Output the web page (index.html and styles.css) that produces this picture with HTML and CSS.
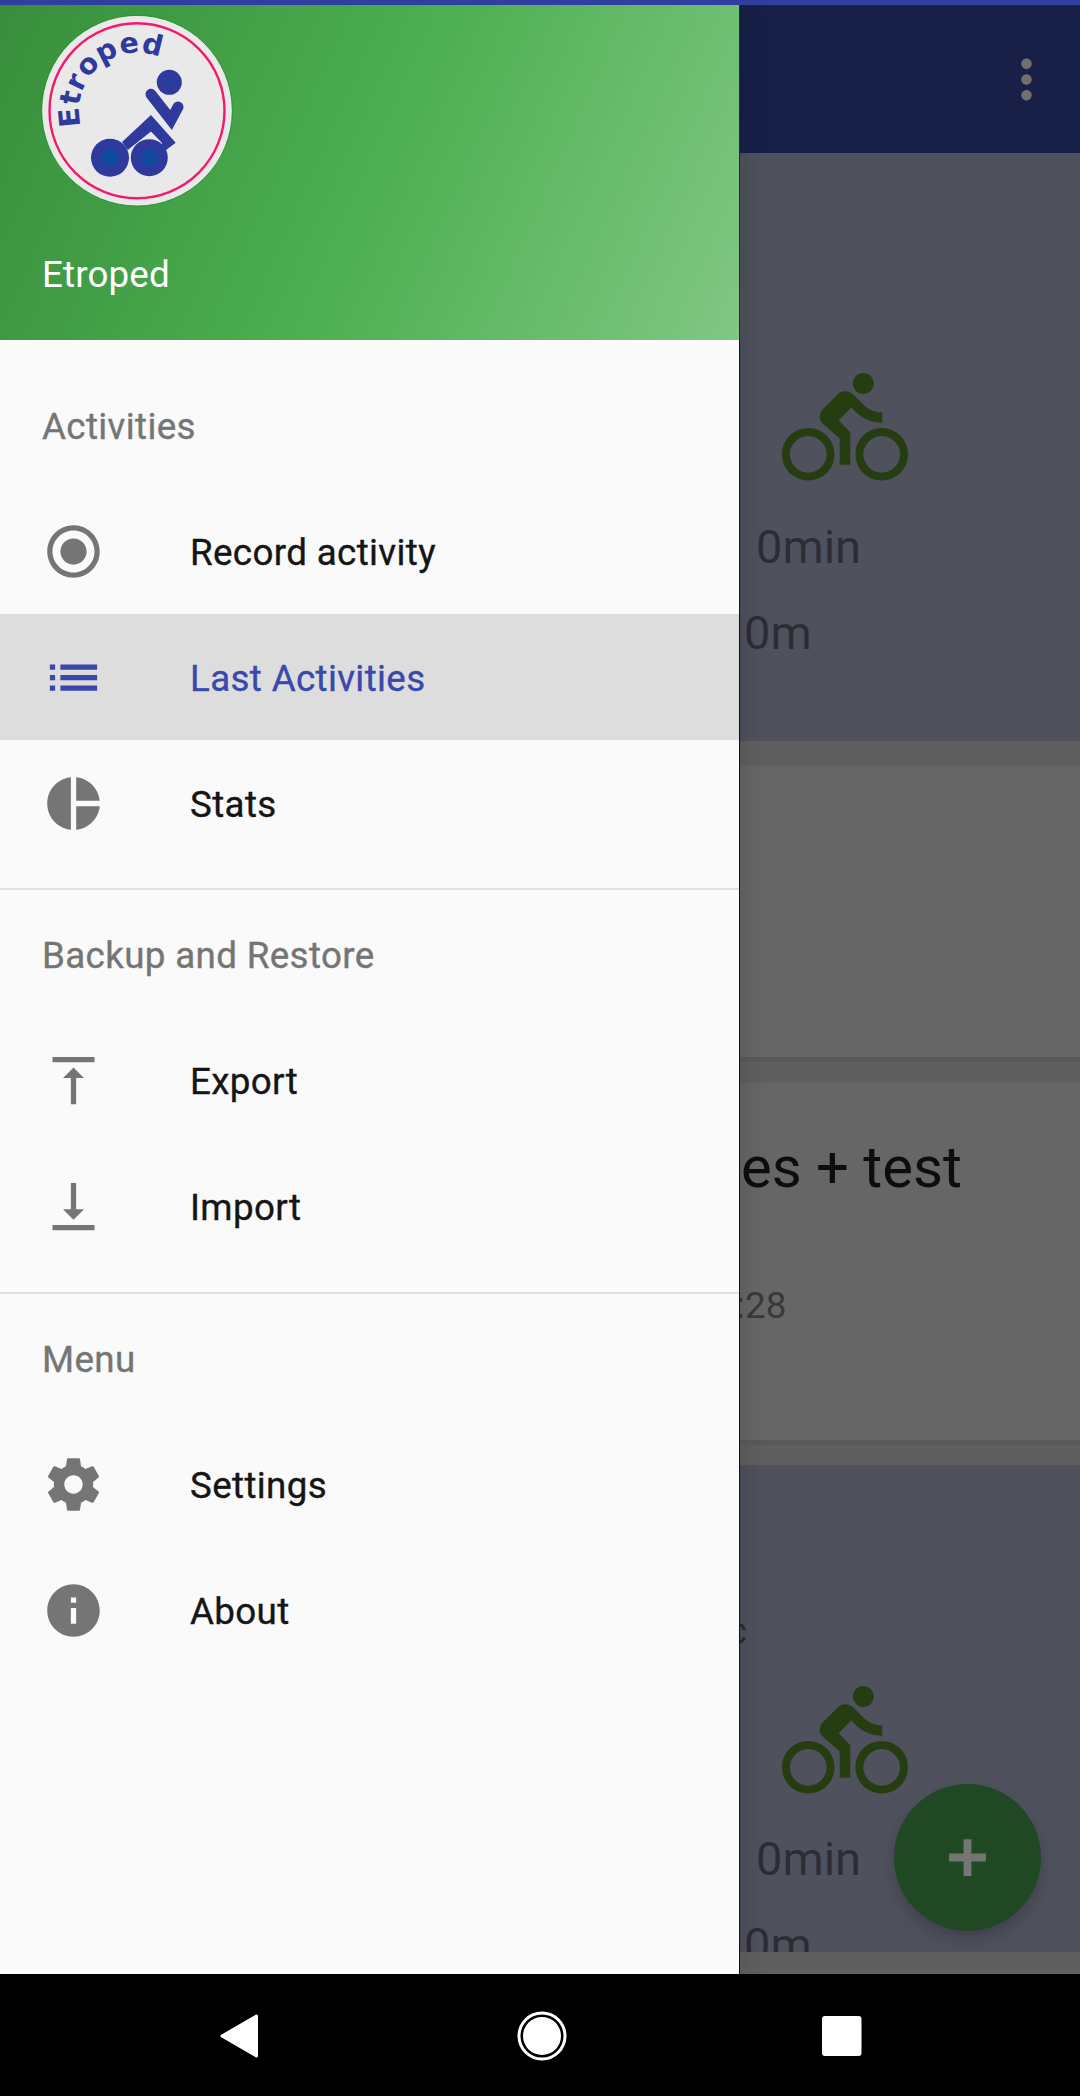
FILE: index.html
```html
<!doctype html>
<html><head>
    <meta charset="utf-8">
    <title>Etroped</title>
    <link rel="stylesheet" href="styles.css">
</head>
<body>
<div class="screen">
    <div class="status-bar"></div>

    <div class="app">
        <!-- page behind the drawer -->
        <div class="page">
            <div class="toolbar">
                <svg class="icon" viewBox="0 0 24 24"><path d="M12 8c1.100 0 2-.9 2-2s-.9-2-2-2-2 .9-2 2 .9 2 2 2zm0 2c-1.100 0-2 .9-2 2s.9 2 2 2 2-.9 2-2-.9-2-2-2zm0 6c-1.100 0-2 .9-2 2s.9 2 2 2 2-.9 2-2-.9-2-2-2z"/></svg>
            </div>

            <div class="card card-trip card-first">
                <div class="trip-head"></div>
                <svg class="icon bike" viewBox="0 0 24 24"><use href="#bike"/></svg>
                <div class="trip-time">0min</div>
                <div class="trip-dist">0m</div>
            </div>

            <div class="card card-empty"></div>

            <div class="card card-test">
                <div class="test-title">es + test</div>
                <div class="test-date">:28</div>
            </div>

            <div class="card card-trip card-last">
                <div class="trip-head"><span class="trip-sec">c</span></div>
                <svg class="icon bike" viewBox="0 0 24 24"><use href="#bike"/></svg>
                <div class="trip-time">0min</div>
                <div class="trip-dist">0m</div>
            </div>

            <div class="fab">
                <svg class="icon" viewBox="0 0 24 24"><path d="M19 13.500h-5.500v5.500h-3v-5.500H5v-3h5.500V5h3v5.500H19z"/></svg>
            </div>
        </div>

        <div class="scrim"></div>

        <!-- navigation drawer -->
        <div class="drawer">
            <div class="drawer-header">
                <svg class="logo" viewBox="41 15 192 192">
                    <circle cx="137" cy="110.700" r="95.300" fill="#e9e9e9" stroke="#0b8f1a" stroke-width="0.800"/>
                    <circle cx="137" cy="110.700" r="87.500" fill="none" stroke="#f5196e" stroke-width="2.400"/>
                    <path id="logo-arc" fill="none" d="M81.100 126.200A58 58 0 0 1 167 61"/>
                    <text class="logo-text"><textPath href="#logo-arc">Etroped</textPath></text>
                    <circle cx="110" cy="157.700" r="19" fill="#2e3a9e"/>
                    <circle cx="110" cy="157.700" r="9" fill="#0f4a9e"/>
                    <circle cx="149.300" cy="157.700" r="18.500" fill="#2e3a9e"/>
                    <circle cx="149.300" cy="157.700" r="8.500" fill="#0f4a9e"/>
                    <circle cx="169.300" cy="82.300" r="12.500" fill="#2e3a9e"/>
                    <circle cx="169.300" cy="82.300" r="2.200" fill="#0f4a9e"/>
                    <path fill="none" stroke="#2e3a9e" stroke-width="11" stroke-linecap="round" stroke-linejoin="miter" d="M151 94.300L171 120L178 107"/>
                    <path fill="#2e3a9e" d="M122 142L151 115L175.700 142.700L162 153L162 143L151 131.500L127.700 150Z"/>
                </svg>
                <div class="drawer-name">Etroped</div>
            </div>

            <div class="drawer-body">
                <div class="group group-first">
                    <div class="group-title">Activities</div>
                    <div class="row">
                        <svg class="icon" viewBox="0 0 24 24"><path d="M12 7c-2.760 0-5 2.240-5 5s2.240 5 5 5 5-2.240 5-5-2.240-5-5-5zm0-5C6.480 2 2 6.480 2 12s4.480 10 10 10 10-4.480 10-10S17.520 2 12 2zm0 18c-4.420 0-8-3.580-8-8s3.580-8 8-8 8 3.580 8 8-3.580 8-8 8z"/></svg>
                        <span>Record activity</span>
                    </div>
                    <div class="row row-active">
                        <svg class="icon" viewBox="0 0 24 24"><path d="M3 13h2v-2H3v2zm0 4h2v-2H3v2zm0-8h2V7H3v2zm4 4h14v-2H7v2zm0 4h14v-2H7v2zM7 7v2h14V7H7z"/></svg>
                        <span>Last Activities</span>
                    </div>
                    <div class="row">
                        <svg class="icon" viewBox="0 0 24 24"><path d="M11 2v20c-5.070-.5-9-4.790-9-10s3.930-9.500 9-10zm2.030 0v8.990H22c-.47-4.740-4.240-8.520-8.970-8.990zm0 11.010V22c4.740-.47 8.500-4.250 8.970-8.990h-8.970z"/></svg>
                        <span>Stats</span>
                    </div>
                </div>

                <div class="group group-second">
                    <div class="group-title">Backup and Restore</div>
                    <div class="row">
                        <svg class="icon" viewBox="0 0 24 24"><path d="M8 11h3v10h2V11h3l-4-4-4 4zM4 3v2h16V3H4z"/></svg>
                        <span>Export</span>
                    </div>
                    <div class="row">
                        <svg class="icon" viewBox="0 0 24 24"><path d="M16 13h-3V3h-2v10H8l4 4 4-4zM4 19v2h16v-2H4z"/></svg>
                        <span>Import</span>
                    </div>
                </div>

                <div class="group">
                    <div class="group-title">Menu</div>
                    <div class="row">
                        <svg class="icon" viewBox="0 0 24 24"><path d="M19.430 12.980c.04-.32.07-.64.07-.98s-.03-.66-.07-.98l2.110-1.650c.19-.15.24-.42.12-.64l-2-3.460c-.12-.22-.39-.3-.61-.22l-2.490 1c-.52-.4-1.080-.73-1.690-.98l-.38-2.650C14.460 2.180 14.250 2 14 2h-4c-.25 0-.46.18-.49.42l-.38 2.650c-.61.25-1.170.59-1.690.98l-2.490-1c-.23-.09-.49 0-.61.22l-2 3.460c-.13.22-.07.49.12.64l2.110 1.650c-.04.32-.07.65-.07.98s.03.66.07.98l-2.110 1.650c-.19.15-.24.42-.12.64l2 3.460c.12.22.39.3.61.22l2.490-1c.52.4 1.080.73 1.690.98l.38 2.650c.03.24.24.42.49.42h4c.25 0 .46-.18.49-.42l.38-2.650c.61-.25 1.170-.59 1.690-.98l2.490 1c.23.09.49 0 .61-.22l2-3.460c.12-.22.07-.49-.12-.64l-2.110-1.650zM12 15.500c-1.930 0-3.500-1.570-3.500-3.500s1.570-3.500 3.500-3.500 3.500 1.570 3.500 3.500-1.570 3.500-3.500 3.500z"/></svg>
                        <span>Settings</span>
                    </div>
                    <div class="row">
                        <svg class="icon" viewBox="0 0 24 24"><path d="M12 2C6.480 2 2 6.480 2 12s4.480 10 10 10 10-4.480 10-10S17.520 2 12 2zm1 15h-2v-6h2v6zm0-8h-2V7h2v2z"/></svg>
                        <span>About</span>
                    </div>
                </div>
            </div>
        </div>
    </div>

    <div class="nav-bar">
        <svg class="nav-icon" viewBox="0 0 60 60"><path fill="#fff" stroke="#fff" stroke-width="3" stroke-linejoin="round" d="M10 30L44.500 10V50Z"/></svg>
        <svg class="nav-icon" viewBox="0 0 60 60"><circle cx="30" cy="30" r="23" fill="none" stroke="#fff" stroke-width="3"/><circle cx="30" cy="30" r="19" fill="#fff"/></svg>
        <svg class="nav-icon" viewBox="0 0 60 60"><rect x="10" y="10" width="39.500" height="40" rx="3" fill="#fff"/></svg>
    </div>
</div>

<svg class="defs" width="0" height="0">
    <defs>
        <path id="bike" d="M15.500 5.500c1.100 0 2-.9 2-2s-.9-2-2-2-2 .9-2 2 .9 2 2 2zM5 12c-2.800 0-5 2.200-5 5s2.200 5 5 5 5-2.200 5-5-2.200-5-5-5zm0 8.500c-1.900 0-3.500-1.600-3.500-3.500s1.600-3.500 3.500-3.500 3.500 1.600 3.500 3.500-1.600 3.500-3.500 3.500zm5.800-10l2.400-2.400.8.8c1.300 1.300 3 2.100 5.100 2.100V9c-1.500 0-2.700-.6-3.600-1.500l-1.900-1.900c-.5-.4-1-.6-1.600-.6s-1.100.2-1.400.6L7.800 8.400c-.4.4-.6.9-.6 1.400 0 .6.2 1.100.6 1.400L11 14v5h2v-6.200l-2.200-2.300zM19 12c-2.800 0-5 2.200-5 5s2.200 5 5 5 5-2.200 5-5-2.200-5-5-5zm0 8.500c-1.900 0-3.500-1.600-3.500-3.500s1.600-3.500 3.500-3.500 3.500 1.600 3.500 3.500-1.600 3.500-3.500 3.500z"/>
    </defs>
</svg>
</body></html>
```

FILE: styles.css
```css
html, body {
    margin: 0;
    padding: 0;
    background: #000;
}

body {
    width: 1080px;
    height: 2096px;
    overflow: hidden;
    font-family: Roboto, "Noto Sans", sans-serif;
}

.defs {
    position: absolute;
}

.screen {
    display: flex;
    flex-direction: column;
    height: 2096px;
}

.status-bar {
    height: 5px;
    background: #303f9f;
    flex: none;
}

.app {
    position: relative;
    height: 1969px;
    flex: none;
    overflow: hidden;
}

.icon {
    display: block;
    width: 63px;
    height: 63px;
    flex: none;
}

/* page behind the drawer */
.page {
    height: 100%;
    background: #eeeeee;
}

.toolbar {
    display: flex;
    align-items: center;
    justify-content: flex-end;
    height: 148px;
    padding-right: 22px;
    background: #3f51b5;
}

/* the overflow dots stay a bit brighter than the scrim allows */
.toolbar .icon {
    position: relative;
    z-index: 1;
    fill: #707070;
}

.card {
    overflow: hidden;
}

.card-trip {
    background: #c5cae9;
}

.card-first {
    height: 588px;
    margin-bottom: 25px;
}

.card-first .trip-head {
    height: 212px;
}

.card-first .trip-time {
    margin-top: 29px;
}

.card-empty {
    height: 291px;
    margin-bottom: 26px;
    background: #fff;
    box-shadow: 0 5px 0 rgba(0, 0, 0, 0.06);
}

.card-test {
    height: 357px;
    margin-bottom: 25px;
    background: #fff;
    box-shadow: 0 5px 0 rgba(0, 0, 0, 0.06);
}

.card-last {
    height: 487px;
}

.trip-head {
    height: 213px;
    position: relative;
}

.trip-sec {
    position: absolute;
    left: 727px;
    top: 144px;
    font-size: 38px;
    line-height: 44px;
    color: rgba(0, 0, 0, 0.45);
}

.bike {
    width: 126px;
    height: 126px;
    margin-left: 782px;
    fill: #5f9a2e;
}

.trip-time,
.trip-dist {
    font-size: 47px;
    line-height: 54px;
    color: rgba(0, 0, 0, 0.45);
}

.trip-time {
    margin: 28px 0 0 756px;
}

.trip-dist {
    margin: 32px 0 0 744px;
}

.test-title {
    margin: 50px 0 0 741px;
    font-size: 58px;
    line-height: 68px;
    color: rgba(0, 0, 0, 0.87);
}

.test-date {
    margin: 83px 0 0 736px;
    font-size: 37px;
    line-height: 44px;
    color: rgba(0, 0, 0, 0.45);
}

.fab {
    position: absolute;
    z-index: 1;
    left: 894px;
    top: 1779px;
    width: 147px;
    height: 147px;
    display: flex;
    align-items: center;
    justify-content: center;
    border-radius: 50%;
    background: #1f4823;
    box-shadow: 0 8px 16px rgba(0, 0, 0, 0.2);
}

.fab .icon {
    fill: #757575;
}

.scrim {
    position: absolute;
    top: 0;
    left: 0;
    right: 0;
    bottom: 0;
    background: rgba(0, 0, 0, 0.6);
}

/* navigation drawer */
.drawer {
    position: absolute;
    top: 0;
    left: 0;
    bottom: 0;
    width: 739.500px;
    display: flex;
    flex-direction: column;
    box-shadow: 4px 0 24px rgba(0, 0, 0, 0.12);
}

.drawer-header {
    height: 335px;
    box-sizing: border-box;
    padding: 10px 0 0 41px;
    border-right: 1.500px solid #3a1d4e;
    background: linear-gradient(114deg, #388e3c, #4caf50 50%, #81c784) border-box;
    flex: none;
}

.logo {
    display: block;
    width: 192px;
    height: 192px;
}

.logo-text {
    font-family: "DejaVu Sans", sans-serif;
    font-weight: bold;
    font-size: 28.500px;
    letter-spacing: 0.600px;
    fill: #2e3a9e;
}

.drawer-name {
    margin: 46px 0 0 1px;
    font-size: 36.750px;
    line-height: 43px;
    letter-spacing: 0.150px;
    color: #fff;
}

.drawer-body {
    flex: 1;
    background: #fafafa;
    border-right: 1.500px solid #101015;
}

.group {
    padding-bottom: 22px;
    border-bottom: 2px solid #e0e0e0;
}

.group:last-child {
    border-bottom: none;
}

.group-first {
    padding-top: 21px;
}

.group-second {
    padding-bottom: 23px;
}

/* Roboto regular with a light stroke sits closest to the device's medium */
.group-title {
    padding: 44px 0 40px 42px;
    font-size: 36.750px;
    line-height: 43px;
    letter-spacing: 0.350px;
    -webkit-text-stroke: 0.350px;
    color: #757575;
}

.row {
    display: flex;
    align-items: center;
    height: 126px;
    padding-left: 42px;
    font-size: 36.750px;
    letter-spacing: 0.350px;
    -webkit-text-stroke: 0.350px;
    color: #151515;
}

.row span {
    padding-top: 3px;
}

.row .icon {
    margin-right: 85px;
    fill: #757575;
}

.row-active {
    background: #dddddd;
    color: #3949ab;
}

.row-active .icon {
    fill: #3949ab;
}

/* system navigation */
.nav-bar {
    flex: none;
    height: 122px;
    box-sizing: border-box;
    padding: 2px 0 0 3px;
    display: flex;
    align-items: center;
    justify-content: center;
    gap: 240px;
    background: #000;
}

.nav-icon {
    display: block;
    width: 60px;
    height: 60px;
}
```
